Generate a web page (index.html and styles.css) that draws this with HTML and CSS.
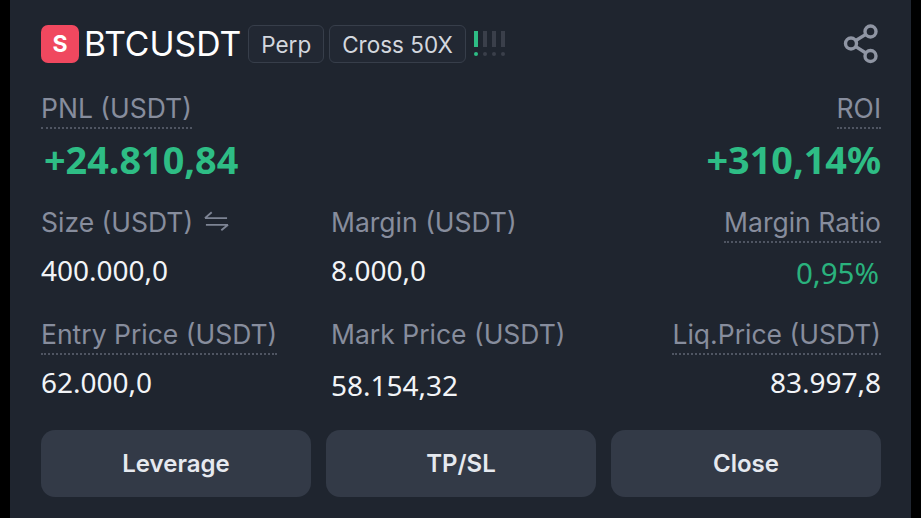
FILE: index.html
```html
<html>
<head>
    <meta charset="UTF-8">
    <title>BTCUSDT Position</title>
    <link rel="stylesheet" href="styles.css">
</head>
<body>
    <div class="card">
        <div class="header">
            <span class="side">S</span>
            <span class="symbol">BTCUSDT</span>
            <span class="chip">Perp</span>
            <span class="chip">Cross 50X</span>
            <span class="risk">
                <span class="risk-mark on"></span>
                <span class="risk-mark"></span>
                <span class="risk-mark"></span>
                <span class="risk-mark"></span>
            </span>
            <svg class="share" width="38" height="40" viewBox="0 0 38 40" fill="none" stroke="#8f95a3" stroke-width="3.4">
                <circle cx="27.5" cy="7.5" r="5.5"/>
                <circle cx="8" cy="19.5" r="5.5"/>
                <circle cx="27.5" cy="32" r="5.5"/>
                <path d="M12.8 16.5 L22.8 10.4 M12.8 22.6 L22.8 29"/>
            </svg>
        </div>

        <div class="pnl-row">
            <div class="pnl-col">
                <span class="label dotted">PNL (USDT)</span>
                <span class="pnl">+24.810,84</span>
            </div>
            <div class="pnl-col right">
                <span class="label dotted">ROI</span>
                <span class="pnl">+310,14%</span>
            </div>
        </div>

        <div class="stat-row first">
            <div class="stat">
                <span class="label">Size (USDT)
                    <svg class="swap" width="25" height="20" viewBox="0 0 26 20" fill="none" stroke="#7d8494" stroke-width="2">
                        <path d="M1 7 H24 M1 7 L8 1 M25 14 H2 M25 14 L18 19.5"/>
                    </svg>
                </span>
                <span class="value">400.000,0</span>
            </div>
            <div class="stat">
                <span class="label">Margin (USDT)</span>
                <span class="value">8.000,0</span>
            </div>
            <div class="stat right">
                <span class="label dotted">Margin Ratio</span>
                <span class="value green">0,95%</span>
            </div>
        </div>

        <div class="stat-row">
            <div class="stat">
                <span class="label dotted">Entry Price (USDT)</span>
                <span class="value">62.000,0</span>
            </div>
            <div class="stat">
                <span class="label">Mark Price (USDT)</span>
                <span class="value low">58.154,32</span>
            </div>
            <div class="stat right">
                <span class="label dotted">Liq.Price (USDT)</span>
                <span class="value">83.997,8</span>
            </div>
        </div>

        <div class="actions">
            <button class="action">Leverage</button>
            <button class="action">TP/SL</button>
            <button class="action">Close</button>
        </div>
    </div>
</body>
</html>
```

FILE: styles.css
```css
html, body {
    margin: 0;
    height: 100%;
    background-color: #000;
    overflow: hidden;
}
body {
    padding: 0 10px;
    box-sizing: border-box;
    font-family: Inter, "Noto Sans", sans-serif;
}
.card {
    height: 518px;
    background-color: #1f252f;
    padding: 25px 30px 0 31px;
    box-sizing: border-box;
}
.header {
    display: flex;
    align-items: center;
    height: 38px;
}
.side {
    width: 38px;
    height: 38px;
    border-radius: 7px;
    background-color: #f0485f;
    color: #fff;
    font-size: 23px;
    font-weight: 700;
    display: flex;
    align-items: center;
    justify-content: center;
}
.symbol {
    font-size: 33.7px;
    color: #fff;
    margin-left: 5px;
    margin-right: 7px;
    margin-top: -1px;
}
.chip {
    height: 36px;
    padding: 0 12px;
    margin-right: 5px;
    border: 1px solid #373e4a;
    border-radius: 6px;
    background-color: #222833;
    color: #d3d7de;
    font-size: 22.5px;
    display: flex;
    align-items: center;
}
.risk {
    display: flex;
    gap: 5px;
    margin-left: 3px;
    margin-top: -2px;
}
.risk-mark {
    display: flex;
    flex-direction: column;
    gap: 5px;
    width: 4px;
}
.risk-mark::before {
    content: "";
    height: 16px;
    background-color: #3a3f4a;
}
.risk-mark::after {
    content: "";
    height: 4px;
    border-radius: 50%;
    background-color: #3a3f4a;
}
.risk-mark.on::before, .risk-mark.on::after {
    background-color: #2ebd85;
}
.share {
    margin-left: auto;
}
.pnl-row {
    display: flex;
    justify-content: space-between;
    margin-top: 30px;
}
.pnl-col, .stat {
    display: flex;
    flex-direction: column;
    align-items: flex-start;
}
.right {
    align-items: flex-end;
}
.label {
    font-size: 26.5px;
    line-height: 30px;
    color: #878d9d;
    padding-bottom: 3px;
    display: flex;
    align-items: center;
    white-space: nowrap;
}
.dotted {
    border-bottom: 2px dotted #4f5562;
    padding-bottom: 4px;
}
.swap {
    margin-left: 11px;
    margin-top: -2px;
}
.pnl {
    font-family: "Noto Sans", sans-serif;
    font-size: 37.8px;
    font-weight: 700;
    line-height: 44px;
    color: #2ebd85;
    margin-top: 9px;
    padding-left: 3px;
}
.stat-row {
    display: grid;
    grid-template-columns: 290px 1fr auto;
    margin-top: 11px;
    height: 99px;
}
.stat-row.first {
    margin-top: 25px;
    height: 101px;
}
.value {
    font-family: "Noto Sans", sans-serif;
    font-size: 28px;
    line-height: 36px;
    color: #f2f4f7;
    margin-top: 9px;
}
.first .value {
    margin-top: 12px;
}
.first .value.green {
    margin-right: 2px;
    font-size: 29.5px;
    color: #2ab27d;
}
.value.low {
    margin-top: 15px;
}
.actions {
    display: flex;
    gap: 15px;
    margin-top: 12px;
}
.action {
    flex: 1;
    height: 67px;
    border: none;
    border-radius: 14px;
    background-color: #333a47;
    color: #e6e9ef;
    font-family: Inter, sans-serif;
    font-size: 24px;
    font-weight: 600;
}
```
